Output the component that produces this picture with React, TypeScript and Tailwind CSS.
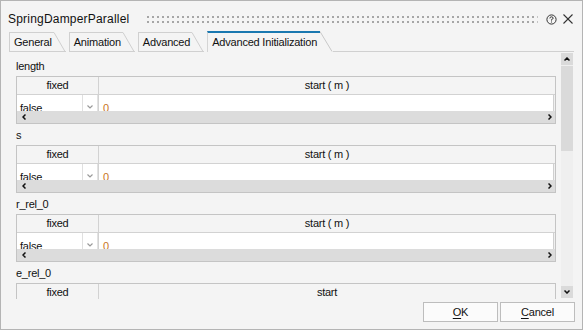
import React from "react";

const FONT = { fontFamily: '"Liberation Sans", Arial, sans-serif' };

function Tab({ label, active }: { label: string; active?: boolean }) {
  if (active) {
    return (
      <div className="flex h-[21px] items-stretch">
        <div className="flex items-center border-l border-t-2 border-l-[#d4d4d4] border-t-[#1a78b0] pl-[4px] pr-[3px] pb-[1px]">
          {label}
        </div>
        <svg width="13" height="21" className="block">
          <line x1="0" y1="0.5" x2="12" y2="20.5" stroke="#c8c8c8" strokeWidth="1" />
        </svg>
      </div>
    );
  }
  return (
    <div className="flex h-[20px] items-stretch">
      <div className="flex items-center border-l border-t border-b border-[#d0d0d0] pl-[4px] pr-[2px] pt-[1px]">
        {label}
      </div>
      <svg width="12" height="20" className="block">
        <line x1="0" y1="0.5" x2="11" y2="19.5" stroke="#cfcfcf" strokeWidth="1" />
        <line x1="0" y1="19.5" x2="12" y2="19.5" stroke="#d0d0d0" strokeWidth="1" />
      </svg>
    </div>
  );
}

function ParamTable({ label, unit }: { label: string; unit?: boolean }) {
  return (
    <div className="flex flex-col">
      <div className="h-[16px] leading-[16px] text-[11px] tracking-[-0.25px] text-[#111]">{label}</div>
      <div className="mt-[2px] flex h-[48px] w-[540px] shrink-0 flex-col border border-[#c4c4c4]">
        <div className="flex h-[18px] shrink-0 border-b border-[#d2d2d2] leading-[17px] text-[11px] tracking-[-0.25px] text-[#111]">
          <div className="w-[82px] border-r border-[#d2d2d2] text-center">fixed</div>
          <div className="flex-1 text-center">{unit ? "start ( m )" : "start"}</div>
        </div>
        <div className="flex h-[16px] shrink-0 overflow-hidden text-[11px] leading-[16px] tracking-[-0.2px]">
          <div className="flex w-[81px] border-r border-[#e2e2e2] bg-white">
            <div className="w-[66px] border-r border-[#e0e0e0] pl-[3px] pt-[5px] text-[#111]">false</div>
            <div className="flex flex-1 justify-center pt-[10px]">
              <svg width="6" height="4" className="block">
                <polyline points="0.5,0.5 3,3 5.5,0.5" fill="none" stroke="#9a9a9a" strokeWidth="1.2" />
              </svg>
            </div>
          </div>
          <div className="w-[1px] bg-[#d2d2d2]" />
          <div className="flex-1 border-r border-[#d0d0d0] bg-white pl-[4px] pt-[5px] text-[#c8741e]">0</div>
          <div className="w-[1px] bg-[#f0f0f0]" />
        </div>
        <div className="flex h-[12px] shrink-0 items-center justify-between bg-[#dcdcdc] pl-[5px] pr-[3px]">
          <svg width="4" height="6" className="block">
            <polyline points="3.5,0.5 1,3 3.5,5.5" fill="none" stroke="#111" strokeWidth="1.5" />
          </svg>
          <svg width="4" height="6" className="block">
            <polyline points="0.5,0.5 3,3 0.5,5.5" fill="none" stroke="#111" strokeWidth="1.5" />
          </svg>
        </div>
      </div>
    </div>
  );
}

export default function App() {
  return (
    <div
      style={FONT}
      className="flex h-[330px] w-[583px] flex-col overflow-hidden border border-[#b4b4b4] bg-[#f4f4f4] text-[#111]"
    >
      {/* title bar */}
      <div className="flex h-[30px] shrink-0 items-center pl-[7px] pr-[9px] pt-[6px]">
        <div className="text-[12px] leading-[14px] tracking-[0.2px] text-[#111]">SpringDamperParallel</div>
        <svg className="ml-[18px] block h-[7px] flex-1">
          <defs>
            <pattern id="grip" width="5" height="5" patternUnits="userSpaceOnUse">
              <rect x="0" y="0" width="2" height="2" fill="#a6a6a6" />
            </pattern>
          </defs>
          <rect x="0" y="0" width="100%" height="7" fill="url(#grip)" />
        </svg>
        <svg width="11" height="11" className="ml-[8px] block">
          <circle cx="5.5" cy="5.5" r="4.6" fill="none" stroke="#333" strokeWidth="1" />
          <path d="M3.9 4.4 Q3.9 2.8 5.5 2.8 Q7.1 2.8 7.1 4.2 Q7.1 5.1 5.5 5.6 L5.5 6.6" fill="none" stroke="#333" strokeWidth="1" />
          <rect x="5" y="7.5" width="1" height="1" fill="#333" />
        </svg>
        <svg width="10" height="10" className="ml-[6px] block">
          <line x1="0.5" y1="0.5" x2="9.5" y2="9.5" stroke="#333" strokeWidth="1.1" />
          <line x1="9.5" y1="0.5" x2="0.5" y2="9.5" stroke="#333" strokeWidth="1.1" />
        </svg>
      </div>

      {/* tabs */}
      <div className="flex h-[21px] shrink-0 items-end gap-[3px] pl-[8px] pr-[8px] text-[11px] tracking-[-0.2px]">
        <Tab label="General" />
        <Tab label="Animation" />
        <Tab label="Advanced" />
        <Tab label="Advanced Initialization" active />
        <div className="-ml-[3px] h-[1px] flex-1 bg-[#d0d0d0]" />
      </div>

      {/* main area */}
      <div className="flex h-[247px] shrink-0">
        <div className="flex h-[247px] flex-col gap-[3px] overflow-hidden pl-[15px] pt-[6px]">
          <ParamTable label="length" unit />
          <ParamTable label="s" unit />
          <ParamTable label="r_rel_0" unit />
          <ParamTable label="e_rel_0" />
        </div>
        <div className="ml-[5px] mt-[1px] flex h-[245px] w-[12px] flex-col bg-[#efefef]">
          <div className="flex h-[12px] items-center justify-center bg-[#dadada]">
            <svg width="6" height="4" className="block">
              <polyline points="0.5,3.5 3,1 5.5,3.5" fill="none" stroke="#111" strokeWidth="1.5" />
            </svg>
          </div>
          <div className="mt-[1px] h-[85px] bg-[#dadada]" />
          <div className="flex-1" />
          <div className="flex h-[12px] items-center justify-center bg-[#dadada]">
            <svg width="6" height="4" className="block">
              <polyline points="0.5,0.5 3,3 5.5,0.5" fill="none" stroke="#111" strokeWidth="1.5" />
            </svg>
          </div>
        </div>
      </div>

      {/* buttons */}
      <div className="flex h-[30px] shrink-0 items-start justify-end gap-[2px] pr-[7px] pt-[3px] text-[11px] tracking-[-0.2px]">
        <button className="flex h-[20px] w-[75px] items-center justify-center border border-[#bdbdbd] bg-[#fbfbfb] text-[#111]">
          <span className="underline underline-offset-2">O</span>K
        </button>
        <button className="flex h-[20px] w-[75px] items-center justify-center border border-[#bdbdbd] bg-[#fbfbfb] text-[#111]">
          <span className="underline underline-offset-2">C</span>ancel
        </button>
      </div>
    </div>
  );
}
